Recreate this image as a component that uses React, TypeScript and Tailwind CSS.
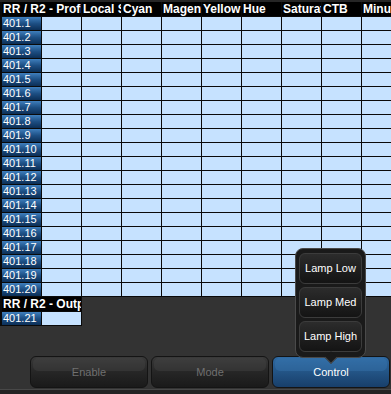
import React from 'react'

const columns = ['RR / R2 - Profile', 'Local Strobe', 'Cyan', 'Magenta', 'Yellow', 'Hue', 'Saturation', 'CTB', 'Minus Green']
const rows = Array.from({ length: 20 }, (_, i) => `401.${i + 1}`)

function NumCell({ label }: { label: string }) {
  return (
    <div className="h-[13px] bg-gradient-to-b from-[#3f7fbd] via-[#1d4f84] to-[#0c2f57] text-white text-[11px] leading-[13px] pl-px overflow-hidden whitespace-nowrap">
      {label}
    </div>
  )
}

function HeadCell({ label, span = false }: { label: string; span?: boolean }) {
  return (
    <div
      className={`h-[14px] bg-black text-white font-bold text-[12px] leading-[14px] pl-px overflow-hidden whitespace-nowrap ${
        span ? 'col-span-2' : ''
      }`}
    >
      {label}
    </div>
  )
}

function BarButton({ label, active = false }: { label: string; active?: boolean }) {
  return (
    <div
      className={`relative flex-1 h-[32px] rounded-[6px] border border-[#141414] flex items-center justify-center text-[11px] overflow-hidden ${
        active
          ? 'bg-gradient-to-b from-[#2f6aa2] to-[#183f6a] text-white'
          : 'bg-gradient-to-b from-[#3a3a3a] via-[#262626] to-[#1a1a1a] text-[#707070]'
      }`}
    >
      <div
        className={`absolute left-[2px] right-[2px] top-[1px] h-[13px] rounded-[5px] ${
          active ? 'bg-[#3a78b2]/40' : 'bg-[#454545]/40'
        }`}
      />
      <span className="relative">{label}</span>
    </div>
  )
}

function LampButton({ label }: { label: string }) {
  return (
    <div className="h-[31px] rounded-[6px] border border-[#3c3c3c] bg-gradient-to-b from-[#2c2c2c] to-[#141414] flex items-center justify-center text-white text-[11px]">
      {label}
    </div>
  )
}

export default function App() {
  return (
    <div
      className="relative w-[391px] h-[394px] bg-[#333333] flex flex-col overflow-hidden"
      style={{ fontFamily: '"Liberation Sans", Arial, sans-serif' }}
    >
      {/* main channel table */}
      <div className="bg-[#0a0a0a] pl-[2px] pb-px border-t-2 border-[#262626]">
        <div className="grid grid-cols-[39px_39px_39px_39px_39px_39px_39px_39px_39px_1fr] gap-px">
          <HeadCell label={columns[0]} span />
          {columns.slice(1).map((c) => (
            <HeadCell key={c} label={c} />
          ))}
          {rows.map((r) => (
            <React.Fragment key={r}>
              <NumCell label={r} />
              {Array.from({ length: 9 }, (_, i) => (
                <div key={i} className="h-[13px] bg-[#c6e2ff]" />
              ))}
            </React.Fragment>
          ))}
        </div>
      </div>

      {/* output table */}
      <div className="w-[82px] bg-[#0a0a0a] pl-[2px] pr-px pb-px">
        <div className="grid grid-cols-[39px_39px] gap-px">
          <HeadCell label="RR / R2 - Output" span />
          <NumCell label="401.21" />
          <div className="h-[13px] bg-[#c6e2ff]" />
        </div>
      </div>

      <div className="flex-1" />

      {/* bottom bar */}
      <div className="flex gap-[3px] pl-[30px] pr-px">
        <BarButton label="Enable" />
        <BarButton label="Mode" />
        <BarButton label="Control" active />
      </div>
      <div className="h-[5px] mt-px border-t border-[#484848] bg-[#242424]" />

      {/* lamp popup */}
      <div className="absolute left-[295px] top-[248px] w-[71px] h-[110px] rounded-[8px] border border-[#4a4a4a] bg-[#1a1a1a] px-[3px] pt-[4px] flex flex-col gap-[3px]">
        <LampButton label="Lamp Low" />
        <LampButton label="Lamp Med" />
        <LampButton label="Lamp High" />
        <div className="absolute left-1/2 -bottom-[5px] w-[9px] h-[9px] -translate-x-1/2 rotate-45 bg-[#1a1a1a] border-r border-b border-[#4a4a4a]" />
      </div>
    </div>
  )
}
